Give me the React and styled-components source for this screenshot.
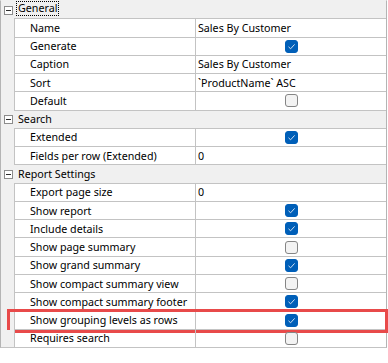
import React from "react";
import styled, { createGlobalStyle } from "styled-components";

const Global = createGlobalStyle`
  html, body { margin: 0; padding: 0; background: #ffffff; }
  body { font-family: "Noto Sans", "Open Sans", sans-serif; }
`;

const Grid = styled.div`
  width: 387px;
  box-sizing: border-box;
  border-left: 1px solid #b4b4b4;
  border-right: 1px solid #b4b4b4;
  border-top: 1px solid #f0f0f0;
  border-bottom: 1px solid #c3c3c3;
  background: #ffffff;
  font-size: 10.7px;
  color: #000000;
`;

const Row = styled.div`
  position: relative;
  display: flex;
  height: 18.28px;
  box-sizing: border-box;
  &:last-child {
    height: 17.28px;
  }
  &:last-child > div {
    border-bottom: none;
  }
`;

const Gutter = styled.div`
  width: 13px;
  flex: none;
  background: #f0f0f0;
  display: flex;
  align-items: center;
  justify-content: center;
`;

const HeaderBody = styled.div`
  flex: 1;
  display: flex;
  align-items: center;
  background: #f0f0f0;
  border-bottom: 1px solid #c3c3c3;
  padding-left: 2px;
`;

const HeaderLabel = styled.span`
  line-height: 13px;
  padding: 0 1px;
  border: 1px dotted ${(p) => (p.$focused ? "#000" : "transparent")};
  margin-top: ${(p) => (p.$focused ? "-3px" : "0")};
`;

const Toggle = styled.span`
  width: 9px;
  height: 9px;
  box-sizing: border-box;
  border: 1px solid #8c8c8c;
  background: #fff;
  display: flex;
  align-items: center;
  justify-content: center;
  margin-left: 2px;
  &::after {
    content: "";
    width: 5px;
    height: 1px;
    background: #2c2c2c;
  }
`;

const NameCell = styled.div`
  width: 182px;
  flex: none;
  box-sizing: border-box;
  border-left: 1px solid #c3c3c3;
  border-right: 1px solid #c3c3c3;
  border-bottom: 1px solid #c3c3c3;
  padding-left: 15px;
  display: flex;
  align-items: center;
  white-space: nowrap;
`;

const ValueCell = styled.div`
  flex: 1;
  box-sizing: border-box;
  border-bottom: 1px solid #c3c3c3;
  padding-left: 2px;
  display: flex;
  align-items: center;
  justify-content: ${(p) => (p.$center ? "center" : "flex-start")};
  white-space: nowrap;
`;

const Check = styled.span`
  width: 13px;
  height: 13px;
  box-sizing: border-box;
  border-radius: 3px;
  margin-left: -1px;
  display: flex;
  align-items: center;
  justify-content: center;
  background: ${(p) => (p.$on ? "#005fb8" : "#f3f3f3")};
  border: 1px solid ${(p) => (p.$on ? "#005fb8" : "#858585")};
`;

const Highlight = styled.div`
  position: absolute;
  left: 6px;
  right: -2px;
  top: -3px;
  bottom: -3px;
  border: 3.5px solid #e84a4a;
  pointer-events: none;
`;

const CheckBox = ({ on }) => (
  <Check $on={on}>
    {on && (
      <svg width="9" height="9" viewBox="0 0 9 9">
        <path d="M1.5 4.8 L3.6 6.8 L7.6 2.4" fill="none" stroke="#cfe0f3" strokeWidth="1" />
      </svg>
    )}
  </Check>
);

const groups = [
  {
    title: "General",
    focused: true,
    rows: [
      ["Name", "Sales By Customer"],
      ["Generate", true],
      ["Caption", "Sales By Customer"],
      ["Sort", "`ProductName` ASC"],
      ["Default", false],
    ],
  },
  {
    title: "Search",
    rows: [
      ["Extended", true],
      ["Fields per row (Extended)", "0"],
    ],
  },
  {
    title: "Report Settings",
    rows: [
      ["Export page size", "0"],
      ["Show report", true],
      ["Include details", true],
      ["Show page summary", false],
      ["Show grand summary", true],
      ["Show compact summary view", false],
      ["Show compact summary footer", true],
      ["Show grouping levels as rows", true, true],
      ["Requires search", false],
    ],
  },
];

export default function App() {
  const items = [];
  groups.forEach((g) => {
    items.push(
      <Row key={g.title}>
        <Gutter>
          <Toggle />
        </Gutter>
        <HeaderBody>
          <HeaderLabel $focused={g.focused}>{g.title}</HeaderLabel>
        </HeaderBody>
      </Row>
    );
    g.rows.forEach(([name, value, marked]) => {
      items.push(
        <Row key={name}>
          <Gutter />
          <NameCell>{name}</NameCell>
          <ValueCell $center={typeof value === "boolean"}>
            {typeof value === "boolean" ? <CheckBox on={value} /> : value}
          </ValueCell>
          {marked && <Highlight />}
        </Row>
      );
    });
  });
  return (
    <>
      <Global />
      <Grid>{items}</Grid>
    </>
  );
}
